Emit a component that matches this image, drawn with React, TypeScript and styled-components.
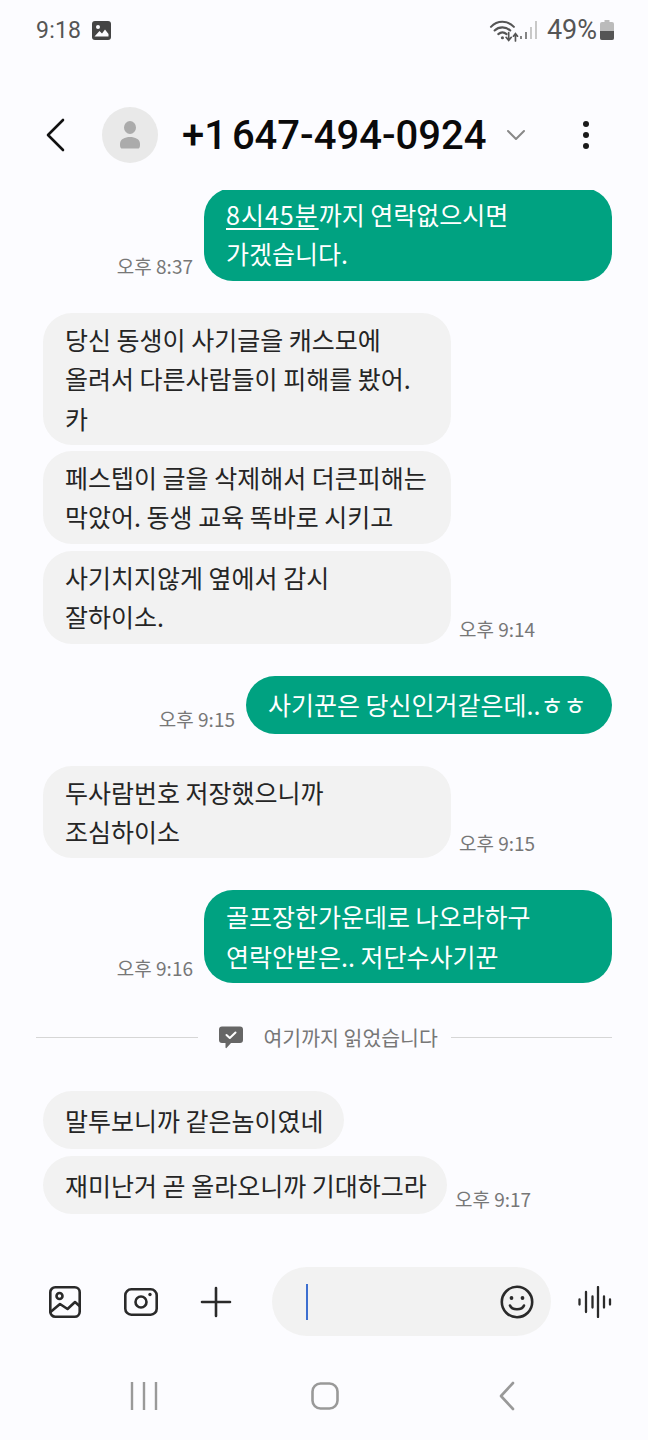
import React from "react";
import styled, { createGlobalStyle } from "styled-components";

const GlobalStyle = createGlobalStyle`
  html, body {
    margin: 0;
    padding: 0;
    background: #fcfcff;
  }
  * {
    box-sizing: border-box;
  }
`;

const Page = styled.div`
  width: 648px;
  height: 1440px;
  background: #fcfcff;
  display: flex;
  flex-direction: column;
  overflow: hidden;
  font-family: "Noto Sans CJK KR", "Noto Sans", sans-serif;
`;

const StatusBar = styled.div`
  height: 60px;
  padding: 0 34px 0 36px;
  display: flex;
  align-items: center;
  color: #555;
  font-family: Roboto, sans-serif;
`;

const Clock = styled.span`
  font-size: 23px;
  letter-spacing: 0.2px;
  margin-right: 11px;
`;

const StatusRight = styled.div`
  margin-left: auto;
  display: flex;
  align-items: center;
`;

const Battery = styled.span`
  font-size: 27px;
  margin: 0 3px 0 8px;
`;

const Header = styled.div`
  height: 70px;
  margin-top: 40px;
  flex-shrink: 0;
  display: flex;
  align-items: center;
`;

const BackButton = styled.div`
  width: 102px;
  padding-left: 45px;
  display: flex;
`;

const Avatar = styled.div`
  width: 56px;
  height: 56px;
  border-radius: 50%;
  background: #e9e9e9;
  display: flex;
  align-items: center;
  justify-content: center;
`;

const PhoneNumber = styled.div`
  margin-left: 24px;
  font-family: Roboto, sans-serif;
  font-size: 40px;
  font-weight: 500;
  word-spacing: -5px;
  color: #0a0a0a;
`;

const Caret = styled.div`
  margin-left: 20px;
  display: flex;
`;

const MoreButton = styled.div`
  margin-left: auto;
  margin-right: 58px;
  display: flex;
`;

const Conversation = styled.div`
  height: 1077px;
  margin-top: 20px;
  flex-shrink: 0;
  overflow: hidden;
  display: flex;
  flex-direction: column;
`;

const Row = styled.div<{ $out?: boolean; $top: number }>`
  display: flex;
  flex-shrink: 0;
  flex-direction: ${(p) => (p.$out ? "row-reverse" : "row")};
  align-items: flex-end;
  margin-top: ${(p) => p.$top}px;
  padding: ${(p) => (p.$out ? "0 36px 0 0" : "0 0 0 43px")};
`;

const Bubble = styled.div<{ $out?: boolean; $width: number }>`
  width: ${(p) => p.$width}px;
  min-height: 58px;
  padding: 7px 0 7px 22px;
  border-radius: 29px;
  display: flex;
  align-items: center;
  font-size: 25px;
  line-height: 39.4px;
  white-space: pre-line;
  background: ${(p) => (p.$out ? "#00a281" : "#f2f2f2")};
  color: ${(p) => (p.$out ? "#fff" : "#252525")};
  u {
    letter-spacing: 1px;
    text-underline-offset: 3px;
    text-decoration-thickness: 1.5px;
  }
`;

const Time = styled.span<{ $out?: boolean }>`
  font-size: 19px;
  line-height: 24px;
  color: #777;
  white-space: nowrap;
  margin: ${(p) => (p.$out ? "0 11px 3px 0" : "0 0 3px 8px")};
`;

const Divider = styled.div`
  margin-top: 36px;
  padding: 0 36px;
  height: 36px;
  flex-shrink: 0;
  display: flex;
  align-items: center;
  color: #777;
  font-size: 20.5px;
`;

const DividerLine = styled.div`
  flex: 1;
  height: 1px;
  background: #d6d6d6;
`;

const DividerLabel = styled.div`
  width: 253px;
  padding-left: 21px;
  display: flex;
  align-items: center;
  gap: 21px;
`;

const Composer = styled.div`
  height: 69px;
  flex-shrink: 0;
  padding-left: 49px;
  display: flex;
  align-items: center;
`;

const ComposerIcon = styled.div<{ $width: number }>`
  width: ${(p) => p.$width}px;
  display: flex;
`;

const InputPill = styled.div`
  width: 279px;
  height: 69px;
  margin-left: 6px;
  padding: 0 17px 0 34px;
  border-radius: 35px;
  background: #f2f2f2;
  display: flex;
  align-items: center;
  justify-content: space-between;
`;

const Cursor = styled.div`
  width: 2px;
  height: 36px;
  background: #3d6fd0;
`;

const VoiceSlot = styled.div`
  margin-left: 27px;
  display: flex;
`;

const NavBar = styled.div`
  margin-top: 30px;
  height: 60px;
  width: 570px;
  display: grid;
  grid-template-columns: 144px 181px 182px;
  align-items: center;
`;

const NavSlot = styled.div<{ $half: number }>`
  display: flex;
  justify-content: flex-end;
  margin-right: ${(p) => -p.$half}px;
`;

const ImageGlyph = () => (
  <svg width="19" height="19" viewBox="0 0 19 19">
    <rect width="19" height="19" rx="3" fill="#444" />
    <circle cx="6" cy="6" r="2" fill="#fcfcff" />
    <path d="M2.5 15.5 L7.5 10 L10 12.5 L13 8.5 L16.5 13 V15.5 Z" fill="#fcfcff" />
  </svg>
);

const WifiGlyph = () => (
  <svg width="30" height="25" viewBox="0 0 28 24" fill="none" stroke="#555" strokeLinecap="round">
    <path d="M1.5 8.5 C7.5 2 17.5 2 23.5 8.5" strokeWidth="2" />
    <path d="M5 12 C9 8 16 8 20 12" strokeWidth="2" />
    <path d="M8.5 15.5 C11 13.3 14 13.3 16.5 15.5" strokeWidth="2" />
    <circle cx="12.5" cy="19" r="1.5" fill="#555" stroke="none" />
    <path d="M18.5 14 V21 M16 18.5 L18.5 21.5 L21 18.5" strokeWidth="1.6" />
    <path d="M25 22 V15 M23 17.5 L25 15 L27 17.5" strokeWidth="1.6" />
  </svg>
);

const SignalGlyph = () => (
  <svg width="20" height="20" viewBox="0 0 20 20" stroke="#666" strokeWidth="1.6">
    <path d="M2 19 V16" />
    <path d="M7 19 V12" />
    <path d="M12 19 V7" stroke="#bbb" />
    <path d="M17 19 V1" stroke="#bbb" />
  </svg>
);

const BatteryGlyph = () => (
  <svg width="14" height="20" viewBox="0 0 14 20">
    <rect x="4.5" y="0" width="5" height="3" fill="#bbb" />
    <rect x="0" y="2" width="14" height="18" rx="2" fill="#bbb" />
    <path d="M0 11 H14 V18 a2 2 0 0 1 -2 2 H2 a2 2 0 0 1 -2 -2 Z" fill="#555" />
  </svg>
);

const PersonGlyph = () => (
  <svg width="20" height="28" viewBox="0 0 20 28" fill="#ababab">
    <ellipse cx="10" cy="6.5" rx="6" ry="6.5" />
    <path d="M2 27.5 C0 27.5 0 25 0 23 C0 18 5 16 10 16 C15 16 20 18 20 23 C20 25 20 27.5 18 27.5 Z" />
  </svg>
);

const ChatCheckGlyph = () => (
  <svg width="24" height="23" viewBox="0 0 24 23">
    <path d="M3 0.5 H21 a3 3 0 0 1 3 3 V14 a3 3 0 0 1 -3 3 H12 L7.5 22 a0.6 0.6 0 0 1 -1 -0.4 V17 H3 a3 3 0 0 1 -3 -3 V3.5 a3 3 0 0 1 3 -3 Z" fill="#666" />
    <path d="M7.5 9 L10.8 12 L16.5 6.5" fill="none" stroke="#fff" strokeWidth="2" strokeLinecap="round" strokeLinejoin="round" />
  </svg>
);

const GalleryGlyph = () => (
  <svg width="32" height="32" viewBox="0 0 32 32" fill="none" stroke="#2a2a2a" strokeWidth="2.6" strokeLinecap="round" strokeLinejoin="round">
    <rect x="1.3" y="1.3" width="29.4" height="29.4" rx="5" />
    <circle cx="10.5" cy="10" r="3" />
    <path d="M1.5 26 L11 18 L18.5 23 L26 16 L30.5 20" />
  </svg>
);

const CameraGlyph = () => (
  <svg width="34" height="28" viewBox="0 0 34 28" fill="none" stroke="#2a2a2a" strokeWidth="2.6">
    <rect x="1.3" y="1.3" width="31.4" height="25.4" rx="6" />
    <circle cx="17" cy="14" r="5.5" />
    <circle cx="26" cy="6.5" r="1.7" fill="#2a2a2a" stroke="none" />
  </svg>
);

const PlusGlyph = () => (
  <svg width="32" height="32" viewBox="0 0 32 32" stroke="#2a2a2a" strokeWidth="2.6" strokeLinecap="round">
    <path d="M16 2 V30 M2 16 H30" />
  </svg>
);

const SmileGlyph = () => (
  <svg width="34" height="34" viewBox="0 0 34 34" fill="none" stroke="#2a2a2a" strokeWidth="2.6" strokeLinecap="round">
    <circle cx="17" cy="17" r="15.2" />
    <circle cx="11.5" cy="13" r="1.9" fill="#2a2a2a" stroke="none" />
    <circle cx="22.5" cy="13" r="1.9" fill="#2a2a2a" stroke="none" />
    <path d="M10 20.5 C12 25.5 22 25.5 24 20.5" />
  </svg>
);

const VoiceGlyph = () => (
  <svg width="34" height="32" viewBox="0 0 34 32" stroke="#2a2a2a" strokeWidth="2.3" strokeLinecap="round">
    <path d="M1.5 13.5 V18.5 M8 6 V26 M14.5 10.5 V21.5 M20 1 V31 M26 10.5 V21.5 M32 13.5 V18.5" />
  </svg>
);

type Message = {
  out?: boolean;
  top: number;
  text: React.ReactNode;
  time?: string;
  width: number;
};

const beforeDivider: Message[] = [
  {
    out: true,
    top: -2,
    width: 408,
    time: "오후 8:37",
    text: (
      <span>
        <u>8시45분</u>까지 연락없으시면{"\n"}가겠습니다.
      </span>
    ),
  },
  { top: 32, width: 408, text: "당신 동생이 사기글을 캐스모에\n올려서 다른사람들이 피해를 봤어.\n카" },
  { top: 6, width: 408, text: "페스텝이 글을 삭제해서 더큰피해는\n막았어. 동생 교육 똑바로 시키고" },
  { top: 7, width: 408, time: "오후 9:14", text: "사기치지않게 옆에서 감시\n잘하이소." },
  { out: true, top: 32, width: 366, time: "오후 9:15", text: "사기꾼은 당신인거같은데..ㅎㅎ" },
  { top: 32, width: 408, time: "오후 9:15", text: "두사람번호 저장했으니까\n조심하이소" },
  { out: true, top: 32, width: 408, time: "오후 9:16", text: "골프장한가운데로 나오라하구\n연락안받은.. 저단수사기꾼" },
];

const afterDivider: Message[] = [
  { top: 36, width: 301, text: "말투보니까 같은놈이였네" },
  { top: 7, width: 404, time: "오후 9:17", text: "재미난거 곧 올라오니까 기대하그라" },
];

const renderMessage = (m: Message, i: number) => (
  <Row key={i} $out={m.out} $top={m.top}>
    <Bubble $out={m.out} $width={m.width}>
      {m.text}
    </Bubble>
    {m.time && <Time $out={m.out}>{m.time}</Time>}
  </Row>
);

const App: React.FC = () => {
  return (
    <Page>
      <GlobalStyle />
      <StatusBar>
        <Clock>9:18</Clock>
        <ImageGlyph />
        <StatusRight>
          <WifiGlyph />
          <SignalGlyph />
          <Battery>49%</Battery>
          <BatteryGlyph />
        </StatusRight>
      </StatusBar>

      <Header>
        <BackButton>
          <svg width="22" height="34" viewBox="0 0 22 34" fill="none" stroke="#111" strokeWidth="2.6" strokeLinecap="round" strokeLinejoin="round">
            <path d="M18 2 L3 17 L18 32" />
          </svg>
        </BackButton>
        <Avatar>
          <PersonGlyph />
        </Avatar>
        <PhoneNumber>+1 647-494-0924</PhoneNumber>
        <Caret>
          <svg width="20" height="12" viewBox="0 0 20 12" fill="none" stroke="#888" strokeWidth="2" strokeLinecap="round" strokeLinejoin="round">
            <path d="M2 2 L10 10 L18 2" />
          </svg>
        </Caret>
        <MoreButton>
          <svg width="8" height="30" viewBox="0 0 8 30" fill="#1a1a1a">
            <circle cx="4" cy="4" r="3" />
            <circle cx="4" cy="15" r="3" />
            <circle cx="4" cy="26" r="3" />
          </svg>
        </MoreButton>
      </Header>

      <Conversation>
        {beforeDivider.map(renderMessage)}
        <Divider>
          <DividerLine />
          <DividerLabel>
            <ChatCheckGlyph />
            <span>여기까지 읽었습니다</span>
          </DividerLabel>
          <DividerLine />
        </Divider>
        {afterDivider.map(renderMessage)}
      </Conversation>

      <Composer>
        <ComposerIcon $width={75}>
          <GalleryGlyph />
        </ComposerIcon>
        <ComposerIcon $width={76}>
          <CameraGlyph />
        </ComposerIcon>
        <ComposerIcon $width={66}>
          <PlusGlyph />
        </ComposerIcon>
        <InputPill>
          <Cursor />
          <SmileGlyph />
        </InputPill>
        <VoiceSlot>
          <VoiceGlyph />
        </VoiceSlot>
      </Composer>

      <NavBar>
        <NavSlot $half={14}>
          <svg width="28" height="28" viewBox="0 0 28 28" stroke="#999" strokeWidth="2.4">
            <path d="M2 0 V28 M14 0 V28 M26 0 V28" />
          </svg>
        </NavSlot>
        <NavSlot $half={14}>
          <svg width="28" height="28" viewBox="0 0 28 28" fill="none" stroke="#999" strokeWidth="2.6">
            <rect x="1.5" y="1.5" width="25" height="25" rx="8" />
          </svg>
        </NavSlot>
        <NavSlot $half={9}>
          <svg width="18" height="30" viewBox="0 0 18 30" fill="none" stroke="#999" strokeWidth="2.6" strokeLinecap="round" strokeLinejoin="round">
            <path d="M15 2 L3 15 L15 28" />
          </svg>
        </NavSlot>
      </NavBar>
    </Page>
  );
};

export default App;
